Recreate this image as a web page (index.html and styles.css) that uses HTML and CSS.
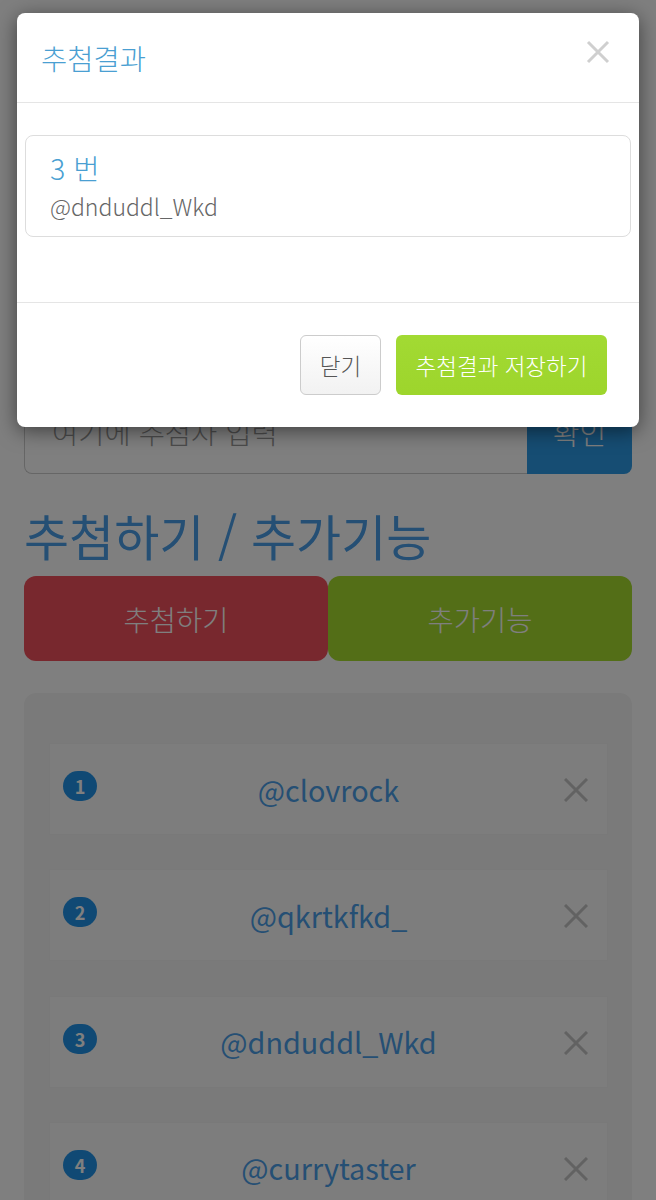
FILE: index.html
```html
<!DOCTYPE html>
<html lang="ko">

<head>
    <meta charset="utf-8">
    <title>추첨결과</title>
    <link rel="stylesheet" href="styles.css">
</head>

<body>
    <main class="page">
        <form class="entry">
            <input class="entry-input" type="text" placeholder="여기에 추첨자 입력">
            <button class="entry-button" type="button">확인</button>
        </form>

        <h1 class="page-title">추첨하기 / 추가기능</h1>

        <div class="actions">
            <button class="action action-draw" type="button">추첨하기</button>
            <button class="action action-extra" type="button">추가기능</button>
        </div>

        <ul class="well">
            <li class="entrant">
                <span class="badge">1</span>
                <span class="entrant-name">@clovrock</span>
                <svg class="entrant-remove" viewBox="0 0 24 24"><path d="M1 1 23 23M23 1 1 23" /></svg>
            </li>
            <li class="entrant">
                <span class="badge">2</span>
                <span class="entrant-name">@qkrtkfkd_</span>
                <svg class="entrant-remove" viewBox="0 0 24 24"><path d="M1 1 23 23M23 1 1 23" /></svg>
            </li>
            <li class="entrant">
                <span class="badge">3</span>
                <span class="entrant-name">@dnduddl_Wkd</span>
                <svg class="entrant-remove" viewBox="0 0 24 24"><path d="M1 1 23 23M23 1 1 23" /></svg>
            </li>
            <li class="entrant">
                <span class="badge">4</span>
                <span class="entrant-name">@currytaster</span>
                <svg class="entrant-remove" viewBox="0 0 24 24"><path d="M1 1 23 23M23 1 1 23" /></svg>
            </li>
        </ul>
    </main>

    <div class="backdrop"></div>

    <section class="modal">
        <header class="modal-header">
            <h2 class="modal-title">추첨결과</h2>
            <svg class="modal-close" viewBox="0 0 24 24"><path d="M2 2 22 22M22 2 2 22" /></svg>
        </header>
        <div class="modal-body">
            <div class="result">
                <div class="result-number">3 번</div>
                <div class="result-name">@dnduddl_Wkd</div>
            </div>
        </div>
        <footer class="modal-footer">
            <button class="btn btn-close" type="button">닫기</button>
            <button class="btn btn-save" type="button">추첨결과 저장하기</button>
        </footer>
    </section>
</body>

</html>
```

FILE: styles.css
```css
:root {
    font-family: "Noto Sans CJK KR", "Noto Sans", sans-serif;
    font-weight: 300;
}

html,
body {
    margin: 0;
    height: 1200px;
    overflow: hidden;
}

body {
    background-color: white;
}

button {
    font-family: inherit;
    font-weight: 300;
}

.page {
    padding: 395px 24px 0;
}

.entry {
    display: flex;
    height: 79px;
}

.entry-input {
    flex: 1;
    min-width: 0;
    box-sizing: border-box;
    padding: 0 27px 6px;
    border: 1px solid #ccc;
    border-right: 0;
    border-radius: 8px 0 0 8px;
    font-family: inherit;
    font-size: 28.5px;
    font-weight: 300;
    background-color: white;
}

.entry-input::placeholder {
    color: #999;
}

.entry-button {
    width: 105px;
    padding-bottom: 6px;
    border: 0;
    border-radius: 0 8px 8px 0;
    background-color: #2d9ae6;
    color: white;
    font-size: 29px;
}

.page-title {
    margin: 26px 0 0;
    font-size: 49px;
    font-weight: 400;
    line-height: 70px;
    color: #4a9ee8;
}

.actions {
    display: flex;
    margin-top: 6px;
}

.action {
    flex: 1;
    height: 85px;
    border: 0;
    border-radius: 12px;
    color: white;
    font-size: 28.5px;
}

.action-draw {
    background-color: #f0505c;
}

.action-extra {
    background-color: #a6dc2f;
}

.well {
    list-style: none;
    margin: 32px 0 0;
    padding: 50px 24px 0 25px;
    height: 600px;
    border-radius: 12px;
    background-color: #f5f5f5;
}

.entrant {
    display: flex;
    align-items: center;
    box-sizing: border-box;
    height: 92px;
    margin-bottom: 34.3px;
    padding: 0 19px 0 13px;
    border: 1px solid #f2f2f2;
    background-color: #fafafa;
}

.badge {
    width: 34px;
    height: 30px;
    margin-top: -6px;
    border-radius: 15px;
    background-color: #2193e8;
    color: white;
    font-size: 18px;
    font-weight: 700;
    line-height: 30px;
    text-align: center;
}

.entrant-name {
    flex: 1;
    padding-right: 4px;
    font-size: 28.8px;
    font-weight: 400;
    text-align: center;
    color: #4a9ee8;
}

.entrant-remove {
    width: 24px;
    height: 24px;
    margin-top: 2px;
}

.entrant-remove path,
.modal-close path {
    fill: none;
    stroke-width: 3;
}

.entrant-remove path {
    stroke: #c4c4c4;
}

.backdrop {
    position: absolute;
    inset: 0;
    background-color: rgba(0, 0, 0, 0.5);
}

.modal {
    position: absolute;
    top: 13px;
    left: 17px;
    width: 622px;
    height: 414px;
    display: flex;
    flex-direction: column;
    border-radius: 8px;
    background-color: white;
    box-shadow: 0 4px 20px rgba(0, 0, 0, 0.5);
}

.modal-header {
    display: flex;
    justify-content: space-between;
    box-sizing: border-box;
    height: 90px;
    padding: 23px 29px 0 24px;
    border-bottom: 1px solid #e5e5e5;
}

.modal-title {
    margin: 0;
    font-size: 28.5px;
    font-weight: 300;
    line-height: 44px;
    color: #4a9fd2;
}

.modal-close {
    width: 24px;
    height: 24px;
    margin-top: 4px;
}

.modal-close path {
    stroke: #cfcfcf;
}

.modal-body {
    box-sizing: border-box;
    height: 200px;
    padding: 32px 8px 0;
    border-bottom: 1px solid #e5e5e5;
}

.result {
    box-sizing: border-box;
    height: 102px;
    padding: 11px 24px;
    border: 1px solid #ddd;
    border-radius: 8px;
}

.result-number {
    font-size: 28.5px;
    line-height: 42px;
    color: #4a9fd2;
}

.result-name {
    font-size: 23px;
    line-height: 34px;
    color: #666;
}

.modal-footer {
    flex: 1;
    display: flex;
    justify-content: flex-end;
    align-items: flex-start;
    gap: 15px;
    padding: 32px 32px 0 0;
}

.btn {
    box-sizing: border-box;
    height: 60px;
    padding: 0;
    border-radius: 6px;
    font-size: 22.5px;
}

.btn-close {
    width: 81px;
    border: 1px solid #ccc;
    background-image: linear-gradient(#fff, #f2f2f2);
    color: #555;
}

.btn-save {
    width: 211px;
    border: 0;
    background-image: linear-gradient(#a2da33, #9dd52c);
    color: white;
}
```
